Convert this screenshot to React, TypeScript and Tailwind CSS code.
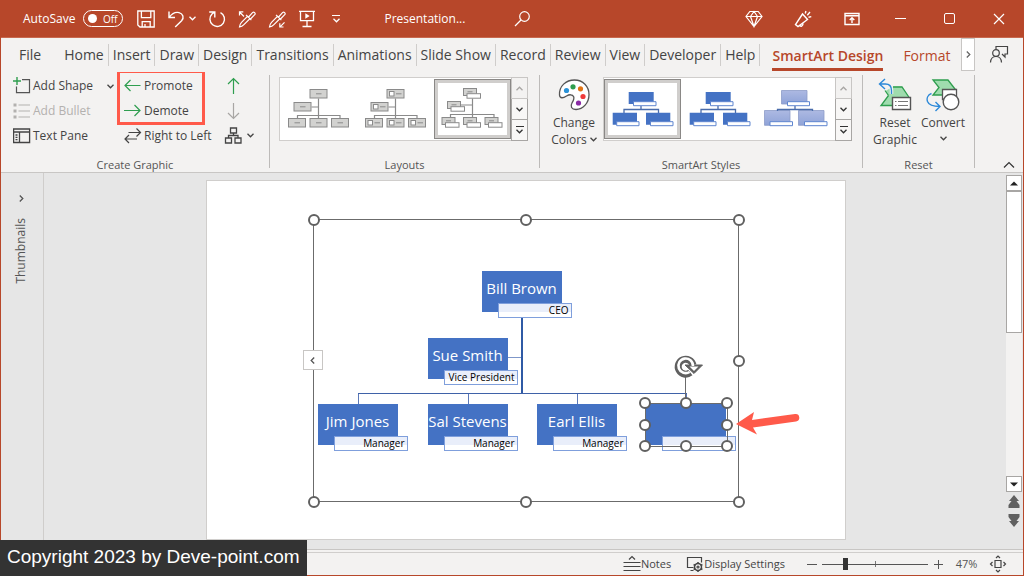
import React from 'react';

interface IconProps {
  className?: string;
  children: React.ReactNode;
  size?: number;
}

const Icon: React.FC<IconProps> = ({ className = '', children, size = 18 }) => (
  <svg
    width={size}
    height={size}
    viewBox={`0 0 ${size} ${size}`}
    fill="none"
    stroke="currentColor"
    strokeWidth="1.2"
    className={`shrink-0 ${className}`}
    aria-hidden="true"
  >
    {children}
  </svg>
);

const Chevron: React.FC<{ className?: string }> = ({ className = '' }) => (
  <svg width="7" height="5" viewBox="0 0 7 5" fill="none" stroke="currentColor" strokeWidth="1.3" className={`shrink-0 ${className}`} aria-hidden="true">
    <path d="M.5 .8 3.5 3.8 6.5 .8" />
  </svg>
);

const TABS = ['Home', 'Insert', 'Draw', 'Design', 'Transitions', 'Animations', 'Slide Show', 'Record', 'Review', 'View', 'Developer', 'Help'];

/* ---------- Title bar ---------- */

const TitleBar: React.FC = () => (
  <header className="flex h-[38px] items-center justify-between border-b border-[#c8694f] bg-[#b7472a] text-white">
    <div className="flex items-center">
      <div className="flex items-center gap-2 pl-[22px]">
        <span id="autosave" className="text-[12px]">AutoSave</span>
        <button
          type="button"
          role="switch"
          aria-checked="false"
          aria-labelledby="autosave"
          className="flex h-[17px] w-10 items-center justify-between rounded-full border border-white pl-1 pr-[5px] text-[10px] leading-none"
        >
          <span className="h-[9px] w-[9px] rounded-full bg-white" />
          Off
        </button>
      </div>

      <div className="flex items-center gap-3 pl-[14px]">
        <button type="button" aria-label="Save">
          <Icon>
            <path d="M.8 1h16.4v16H3L.8 15z M4.4 1v6.6h9.4V1 M5.2 17v-5.4h8V17 M8 17v-3" strokeWidth="1.3" />
          </Icon>
        </button>
        <button type="button" aria-label="Undo" className="flex w-[29px] items-center justify-between">
          <Icon>
            <path d="M2 1.5v6h6 M2.2 7.3C5 3.5 8.5 1.8 12 2.6c4.2 1 5.3 5.4 2.6 8.2L8.2 17" strokeWidth="1.4" />
          </Icon>
          <Chevron />
        </button>
        <button type="button" aria-label="Redo">
          <Icon>
            <path d="M1.2 2h5.6v5.6 M12.5 2.6a7.3 7.3 0 1 1-8.5 1.4l2.5-1.8" strokeWidth="1.4" />
          </Icon>
        </button>
        <button type="button" aria-label="Pick up style">
          <Icon>
            <path d="M1.5 17c.3-2.5.8-3.5 2-4.7l6-6 2.4 2.4-6 6C4.7 15.9 3.5 16.7 1.5 17z M8 4.8l5.4 5.4 M10.6 7l3.9-4.4c1.4-1.3 3.5.6 2.2 2.1L12.5 9" />
            <path d="M1.5 2l4.5 4.5 M1.5 5.5V1.8h3.8" />
          </Icon>
        </button>
        <button type="button" aria-label="Apply style">
          <Icon>
            <path d="M1.5 17c.3-2.5.8-3.5 2-4.7l6-6 2.4 2.4-6 6C4.7 15.9 3.5 16.7 1.5 17z M8 4.8l5.4 5.4 M10.6 7l3.9-4.4c1.4-1.3 3.5.6 2.2 2.1L12.5 9" />
            <path d="M16.5 12.3l-4.5 4.5 M11.8 13.2V17h3.7" />
          </Icon>
        </button>
        <button type="button" aria-label="Start from beginning">
          <Icon>
            <path d="M1 1.3h16 M2.5 1.5v9.2h13V1.5 M9 10.7v5.8 M4.5 16.5h9" strokeWidth="1.3" />
            <path d="M7.3 3.3l4.4 2.7-4.4 2.7z" fill="currentColor" stroke="none" />
          </Icon>
        </button>
        <button type="button" aria-label="Customize Quick Access Toolbar" className="flex w-4 flex-col items-center gap-[2px]">
          <span className="h-px w-2 bg-white" />
          <Chevron />
        </button>
      </div>

      <span className="pl-10 text-[12px]">Presentation...</span>
      <button type="button" aria-label="Search" className="ml-[49px]">
        <Icon>
          <circle cx="10.5" cy="6.5" r="4.8" />
          <path d="M7 10 1 16" />
        </Icon>
      </button>
    </div>

    <div className="flex h-full">
      <button type="button" aria-label="Premium" className="flex w-[49px] items-center justify-center">
        <Icon>
          <path d="M4.8 1.5h8.4L17 6.5 9 16.5 1 6.5z M1 6.5h16 M9 1.5 5.5 6.5 9 16.5l3.5-10z" />
        </Icon>
      </button>
      <button type="button" aria-label="Coming soon" className="flex w-[49px] items-center justify-center">
        <Icon>
          <path d="M8.5 4 1.5 14.5l2.5 2L13.5 9.5z M8.5 4l5 5.5 M5.5 15.2c.8 2 4 1 3.4-1.9 M11.3 3.5l.6-2.5 M13.3 5.2 16 2 M14.5 7.2l2.8-.6" strokeWidth="1.4" />
        </Icon>
      </button>
      <button type="button" aria-label="Ribbon display options" className="flex w-[49px] items-center justify-center">
        <Icon>
          <path d="M2 3.5h14v11H2z M2 5.8h14 M9 13V8 M6.7 10 9 7.8l2.3 2.2" strokeWidth="1.4" />
        </Icon>
      </button>
      <button type="button" aria-label="Minimize" className="flex w-[49px] items-center justify-center">
        <span className="h-px w-[11px] bg-white" />
      </button>
      <button type="button" aria-label="Maximize" className="flex w-[49px] items-center justify-center">
        <span className="h-[11px] w-[11px] rounded-xs border border-white" />
      </button>
      <button type="button" aria-label="Close" className="flex w-[49px] items-center justify-center">
        <Icon>
          <path d="M4 4l10 10 M14 4 4 14" />
        </Icon>
      </button>
    </div>
  </header>
);

/* ---------- Tabs ---------- */

const RibbonTabs: React.FC = () => (
  <nav className="flex h-[34px] items-center justify-between text-[14px] text-[#444]">
    <div className="flex items-center">
      <button type="button" className="h-[22px] pl-[18px] pr-[19px] leading-[22px]">File</button>
      {TABS.map(tab => (
        <button key={tab} type="button" className="h-[22px] border-r border-[#cfcdcb] px-1 leading-[22px] whitespace-nowrap">
          {tab}
        </button>
      ))}
      <button type="button" className="ml-3 mt-[5px] border-b-3 border-[#b7472a] pb-px leading-[23px] font-semibold whitespace-nowrap text-[#b7472a]">
        SmartArt Design
      </button>
      <button type="button" className="ml-5 text-[#b7472a]">Format</button>
    </div>
    <div className="flex h-full items-center">
      <button type="button" aria-label="Scroll tabs" className="flex h-[33px] w-[14px] items-center justify-center self-start border border-[#c8c6c4] bg-white text-[#666]">
        <Chevron className="-rotate-90" />
      </button>
      <button type="button" aria-label="Share" className="mx-[14px] text-[#444]">
        <Icon size={20}>
          <path d="M7 4.5V1.5h11.5v7.5H16v3l-3-3" />
          <circle cx="7" cy="8" r="3.3" />
          <path d="M1.5 17.5c.2-3.8 2.2-6 5.5-6s5.3 2.2 5.5 6" />
        </Icon>
      </button>
    </div>
  </nav>
);

/* ---------- Ribbon ---------- */

interface GroupProps {
  label: string;
  className: string;
  children: React.ReactNode;
}

const RibbonGroup: React.FC<GroupProps> = ({ label, className, children }) => (
  <section className={`mt-[3px] mb-1 flex shrink-0 flex-col border-r border-[#bdbbb9] ${className}`}>
    <div className="flex h-[84px] shrink-0">{children}</div>
    <p className="text-center text-[11px] leading-[12px] text-[#555]">{label}</p>
  </section>
);

const CreateGraphic: React.FC = () => (
  <RibbonGroup label="Create Graphic" className="w-[269px]">
    <div className="-mt-px flex w-[104px] flex-col pl-3 text-[12px]">
      <button type="button" className="flex h-[24px] items-center gap-[2px] whitespace-nowrap">
        <Icon>
          <path d="M9 2.6h7.5v13h-13V9.5" stroke="#555" />
          <path d="M4 0v8 M0 4h8" stroke="#2f9e4f" strokeWidth="1.4" />
        </Icon>
        Add Shape
      </button>
      <button type="button" disabled className="flex h-[25px] items-center gap-[2px] whitespace-nowrap text-[#b3b1af]">
        <Icon>
          <path d="M5.5 3H17 M5.5 9H17 M5.5 15H17" />
          <path d="M.5 1.5h3v3h-3z M.5 7.5h3v3h-3z M.5 13.5h3v3h-3z" fill="currentColor" stroke="none" />
        </Icon>
        Add Bullet
      </button>
      <button type="button" className="flex h-[25px] items-center gap-[2px] whitespace-nowrap">
        <Icon>
          <path d="M.6 2h16v13.5h-16z M.6 5h16 M6.5 5v10.5 M2.5 8h2 M2.5 10.3h2 M2.5 12.6h2" stroke="#444" strokeWidth="1.3" />
        </Icon>
        Text Pane
      </button>
    </div>
    <button type="button" aria-label="Add Shape options" className="-mt-px flex h-[24px] w-[11px] items-center justify-center">
      <Chevron />
    </button>
    <div className="relative -mt-px flex w-[104px] flex-col pl-2 text-[12px]">
      <button type="button" className="flex h-[24px] items-center gap-[2px] whitespace-nowrap">
        <Icon className="text-[#2f9e4f]">
          <path d="M1 8.5h15.5 M6.5 3 1 8.5 6.5 14" />
        </Icon>
        Promote
      </button>
      <button type="button" className="flex h-[25px] items-center gap-[2px] whitespace-nowrap">
        <Icon className="text-[#2f9e4f]">
          <path d="M0 8.5h16 M10.5 3l5.5 5.5-5.5 5.5" />
        </Icon>
        Demote
      </button>
      <button type="button" className="flex h-[25px] items-center gap-[2px] whitespace-nowrap">
        <Icon>
          <path d="M4.5 5.5h12 M12.5 1.5l4 4-4 4 M1 12h12 M5 8 1 12l4 4" stroke="#444" />
        </Icon>
        Right to Left
      </button>
      {/* Highlight round Promote / Demote */}
      <div className="pointer-events-none absolute -top-1 left-px h-[55px] w-[88px] border-3 border-[#ff5a4a]" />
    </div>
    <div className="-mt-px flex flex-col pl-1">
      <button type="button" aria-label="Move up" className="flex h-[24px] items-center text-[#2f9e4f]">
        <Icon>
          <path d="M9.5 17V1.5 M4 7l5.5-5.5L15 7" />
        </Icon>
      </button>
      <button type="button" aria-label="Move down" disabled className="flex h-[25px] items-center text-[#a8a6a4]">
        <Icon>
          <path d="M9.5 1v15.5 M4 11l5.5 5.5L15 11" />
        </Icon>
      </button>
      <button type="button" aria-label="Org chart layout" className="flex h-[25px] items-center gap-[5px] text-[#444]">
        <Icon>
          <path d="M6.5 1h6v5h-6z M1.5 11h6v5h-6z M11 11h6v5h-6z M9.5 6v2.5 M4.5 11V8.5H14V11" strokeWidth="1.3" />
        </Icon>
        <Chevron />
      </button>
    </div>
  </RibbonGroup>
);

const LAYOUT_BOXES = [
  [30, 11.5],
  [14, 24.5],
  [8.5, 40.5],
  [30, 40.5],
  [51.5, 40.5],
];

const LAYOUT_TITLE_BOXES = [
  [29.5, 10.5],
  [13.5, 23.5],
  [8, 39.5],
  [29.5, 39.5],
  [51, 39.5],
];

const LayoutThumb: React.FC<{ picture?: boolean }> = ({ picture }) => (
  <svg width="77" height="62" viewBox="0 0 77 62" fill="none" stroke="#8a8a8a" aria-hidden="true">
    <path d="M38.5 20.5v20 M31.5 29h7 M17.5 40.5V37.5h42.5v3" strokeWidth="1.2" />
    {LAYOUT_BOXES.map(([x, y]) => (
      <g key={`${x}-${y}`}>
        <rect x={x} y={y} width="17" height="8.5" fill="#d2d2d0" />
        {picture && <rect x={x + 2.5} y={y + 2} width="4.5" height="4.5" fill="#fff" />}
        <path d={picture ? `M${x + 9} ${y + 4.3}h5.5` : `M${x + 6} ${y + 4.3}h5.5`} />
      </g>
    ))}
  </svg>
);

const TitledLayoutThumb: React.FC = () => (
  <svg width="77" height="62" viewBox="0 0 77 62" fill="none" stroke="#8a8a8a" aria-hidden="true">
    <path d="M38.5 20.5v19 M27 27h11.5 M16.5 39.5V36.5H60v3" strokeWidth="1.2" />
    {LAYOUT_TITLE_BOXES.map(([x, y]) => (
      <g key={`${x}-${y}`}>
        <rect x={x} y={y} width="13" height="7" fill="#d2d2d0" />
        <path d={`M${x + 4} ${y + 3.3}h5`} />
        <rect x={x + 3.5} y={y + 5.2} width="13.5" height="4.5" fill="#fff" />
      </g>
    ))}
  </svg>
);

const StyleThumb: React.FC = () => (
  <svg width="77" height="62" viewBox="0 0 77 62" fill="none" aria-hidden="true">
    <path d="M37 28v3.5 M20 35v-3.5h34.5V35" stroke="#4a6cab" strokeWidth="1.3" />
    <path d="M24.7 14h25v12h-25z M8.7 34.7h24.3v12H8.7z M42 34.7h24.3v12H42z" fill="#4472c4" />
    <path d="M29.5 23.7h22.5v4H29.5z M12.7 43.7h22.3v4H12.7z M46.5 43.7H69v4H46.5z" fill="#fff" stroke="#5f86cf" />
  </svg>
);

const SoftStyleThumb: React.FC = () => (
  <svg width="77" height="62" viewBox="0 0 77 62" fill="none" aria-hidden="true">
    <defs>
      <linearGradient id="soft" x1="0" y1="0" x2="0" y2="1">
        <stop offset="0" stopColor="#adb9e2" />
        <stop offset="1" stopColor="#8fa3d8" />
      </linearGradient>
    </defs>
    <g fill="url(#soft)" stroke="#8d9cc8" strokeWidth=".8">
      <path d="M23.5 12.5h25.5v13.5H23.5z" />
      <path d="M6.5 32.5H32v14.8H6.5z" />
      <path d="M40.5 32.5H66v14.8H40.5z" />
    </g>
    <path d="M37 28v3.5 M19.5 33v-1.5h35V33" stroke="#4a6cab" strokeWidth="1.3" />
    <path d="M29.5 23.7h22v4h-22z M12 43.7h22.5v4H12z M46.5 43.7H69v4H46.5z" fill="#fff" stroke="#5f86cf" />
  </svg>
);

interface GalleryProps {
  label: string;
  items: { name: string; thumb: React.ReactNode }[];
  selected: number;
}

const Gallery: React.FC<GalleryProps> = ({ label, items, selected }) => (
  <div className="mt-[2px] flex h-16 border border-[#d0cecc] bg-white" role="group" aria-label={label}>
    {items.map((item, i) => (
      <button key={item.name} type="button" aria-label={item.name} aria-pressed={i === selected} className="relative w-[77px]">
        {item.thumb}
        {i === selected && (
          <span className="absolute inset-x-0 top-px bottom-px border border-[#8a8886]">
            <span className="block h-full w-full border-3 border-[#d0cecc]" />
          </span>
        )}
      </button>
    ))}
    <div className="-my-px -mr-px flex w-[17px] flex-col text-[#333]">
      <button type="button" aria-label={`${label} up`} disabled className="flex h-[22px] items-center justify-center border border-[#c8c6c4] bg-[#f3f2f1] text-[#a8a6a4]">
        <Chevron className="rotate-180" />
      </button>
      <button type="button" aria-label={`${label} down`} className="flex h-[21px] items-center justify-center border-x border-b border-[#a8a6a4] bg-[#f8f7f6]">
        <Chevron />
      </button>
      <button type="button" aria-label={`${label} more`} className="flex h-[21px] flex-col items-center justify-center gap-[2px] border-x border-b border-[#a8a6a4] bg-[#f8f7f6]">
        <span className="h-px w-2 bg-[#333]" />
        <Chevron />
      </button>
    </div>
  </div>
);

const Ribbon: React.FC = () => (
  <div className="flex h-[101px] overflow-hidden border-b border-[#c8c6c4] text-[#444]">
    <CreateGraphic />

    <RibbonGroup label="Layouts" className="w-[270px]">
      <div className="pl-[9px]">
        <Gallery
          label="Layouts"
          selected={2}
          items={[
            { name: 'Organization Chart', thumb: <LayoutThumb /> },
            { name: 'Picture Organization Chart', thumb: <LayoutThumb picture /> },
            { name: 'Name and Title Organization Chart', thumb: <TitledLayoutThumb /> },
          ]}
        />
      </div>
    </RibbonGroup>

    <RibbonGroup label="SmartArt Styles" className="w-[323px]">
      <button type="button" className="flex w-[63px] flex-col items-center pl-[5px] pt-[3px] text-[12px] leading-[17px]">
        <svg width="34" height="34" viewBox="0 0 34 34" fill="none" className="mb-[2px] shrink-0" aria-hidden="true">
          <path
            d="M2.5 17C2 8 9 2 17.5 2 26 2 32 8.5 32 16.5 32 25 26 31.5 19 31.5c-4.5 0-6-3.2-4-6.5 1.3-2.2 2.5-4.2 1.7-6.3-1.2-2.7-4.7-2.2-7.2-.7C6.5 20 2.8 21 2.5 17z"
            fill="#fff"
            stroke="#555"
            strokeWidth="1.3"
          />
          <circle cx="9.5" cy="12.5" r="2.6" fill="#2b93d8" />
          <circle cx="16" cy="8.8" r="2.6" fill="#2f9e4f" />
          <circle cx="23.5" cy="10.8" r="2.6" fill="#e07414" />
          <circle cx="26" cy="18.5" r="2.6" fill="#ef3b3b" />
          <circle cx="21.5" cy="25" r="2.6" fill="#8a2ba5" />
        </svg>
        <span>Change</span>
        <span className="flex items-center gap-[3px]">Colors <Chevron /></span>
      </button>
      <div>
        <Gallery
          label="SmartArt Styles"
          selected={0}
          items={[
            { name: 'Simple Fill', thumb: <StyleThumb /> },
            { name: 'White Outline', thumb: <StyleThumb /> },
            { name: 'Subtle Effect', thumb: <SoftStyleThumb /> },
          ]}
        />
      </div>
    </RibbonGroup>

    <RibbonGroup label="Reset" className="w-[112px]">
      <button type="button" className="ml-2 flex w-12 flex-col items-center pt-[3px] text-[12px] leading-[17px]">
        <svg width="34" height="34" viewBox="0 0 34 34" fill="none" className="mb-[2px] shrink-0" aria-hidden="true">
          <path d="M15 8.5h9l8 12V27.5H2.5l8-9.5-3-5z" fill="#9fdcae" />
          <path d="M15 9h9l7.5 11 M10.5 17.5 3 27.5h11 M10.5 17.5 7 12.5" stroke="#2f9e4f" strokeWidth="1.3" />
          <path d="M1.5 6h6c4 0 6 2.5 6 6.5v3.5 M7 1 1.5 6 7 11" stroke="#f3f2f1" strokeWidth="3.5" />
          <path d="M1.5 6h6c4 0 6 2.5 6 6.5v3.5 M7 1 1.5 6 7 11" stroke="#2b88d8" strokeWidth="1.4" />
          <path d="M14.5 19.5H32.5V31.5H14.5z" fill="#fff" stroke="#555" strokeWidth="1.4" />
          <path d="M17 23.5h1.5 M20 23.5h10 M17 27.5h1.5 M20 27.5h10" stroke="#777" />
        </svg>
        <span>Reset</span>
        <span>Graphic</span>
      </button>
      <button type="button" className="flex w-12 flex-col items-center pt-[3px] text-[12px] leading-[17px]">
        <svg width="34" height="34" viewBox="0 0 34 34" fill="none" className="mb-[2px] shrink-0" aria-hidden="true">
          <path d="M7 2h15l7 9-6 6H7l6-7.5z" fill="#9fdcae" stroke="#2f9e4f" strokeWidth="1.3" />
          <path d="M16.5 11.5h14v10h-14z" fill="#fff" stroke="#555" strokeWidth="1.3" />
          <circle cx="25" cy="24" r="7.8" fill="#fff" stroke="#555" strokeWidth="1.4" />
          <path d="M5.5 15.5C1.5 17 .5 20.5 1.5 23.5 3 27.5 8 28.5 14 28.5 M9.5 24l4.5 4.5L9.5 33" stroke="#2b88d8" strokeWidth="1.4" />
        </svg>
        <span>Convert</span>
        <Chevron className="mt-[5px]" />
      </button>
    </RibbonGroup>

    <button type="button" aria-label="Collapse the Ribbon" className="mr-2 mb-[3px] ml-auto self-end">
      <svg width="12" height="8" viewBox="0 0 12 8" fill="none" stroke="#333" strokeWidth="1.2" aria-hidden="true">
        <path d="M1 6.5 6 1.5l5 5" />
      </svg>
    </button>
  </div>
);

/* ---------- Slide ---------- */

interface ChartNode {
  name: string;
  title: string;
  x: number;
  y: number;
}

const NODES: ChartNode[] = [
  { name: 'Bill Brown', title: 'CEO', x: 275, y: 90 },
  { name: 'Sue Smith', title: 'Vice President', x: 221, y: 157 },
  { name: 'Jim Jones', title: 'Manager', x: 111, y: 223 },
  { name: 'Sal Stevens', title: 'Manager', x: 221, y: 223 },
  { name: 'Earl Ellis', title: 'Manager', x: 330, y: 223 },
  { name: '', title: '', x: 439, y: 223 },
];

const FRAME_HANDLES = [
  [107, 39], [319, 39], [532, 39],
  [532, 180],
  [107, 321], [319, 321], [532, 321],
];

const SHAPE_HANDLES = [
  [438, 222], [479, 222], [520, 222],
  [438, 244], [520, 244],
  [438, 265], [479, 265], [520, 265],
];

const Slide: React.FC = () => (
  <div className="relative h-[358px] w-[638px] shrink-0 bg-white outline outline-[#d0cecc]">
    <svg width="638" height="358" viewBox="0 0 638 358" fill="none" className="absolute inset-0" aria-hidden="true">
      <path d="M301 176.5h14" stroke="#7f97c9" />
      <path d="M151.5 223v-10 M261.5 223v-10 M370.5 223v-10 M479.5 223v-10" stroke="#5b78b8" />
      <path d="M151 212.5h329" stroke="#3f62a8" />
      <path d="M315 137v75" stroke="#2f5aa5" strokeWidth="2" />
    </svg>

    {NODES.map(node => (
      <div key={`${node.x}-${node.y}`} className="absolute" style={{ left: node.x, top: node.y }}>
        <div className="h-[41px] w-[80px] bg-[#4472c4] text-center text-[15px] leading-[34px] whitespace-nowrap text-white">
          {node.name}
        </div>
        <div className="absolute top-8 left-4 h-[15px] w-[74px] border border-[#7f9fdc] bg-linear-to-b from-[#e9eefa] from-60% to-white to-60% pr-[2px] text-right text-[10px] leading-[12px] whitespace-nowrap text-black">
          {node.title}
        </div>
      </div>
    ))}

    {/* Selection frames and handles */}
    <svg width="638" height="358" viewBox="0 0 638 358" fill="none" className="pointer-events-none absolute inset-0" aria-hidden="true">
      <path d="M106.5 38.5h425v282h-425z" stroke="#6b6b6b" />
      <path d="M438.5 222.5h82v43h-82z M478.5 222v-27" stroke="#6b6b6b" />
      <g fill="#fff" stroke="#606060" strokeWidth="2">
        {[...FRAME_HANDLES, ...SHAPE_HANDLES].map(([cx, cy]) => (
          <circle key={`${cx}-${cy}`} cx={cx} cy={cy} r="5" />
        ))}
      </g>
      {/* Rotate handle: dark outline first, then the white core */}
      <path d="M483.3 191.6A7.5 7.5 0 1 1 486 184" stroke="#606060" strokeWidth="7" />
      <path d="M478 184h17.5l-8.5 8.5z" fill="#606060" stroke="#606060" />
      <path d="M482.6 191A7.3 7.3 0 1 1 486 185" stroke="#fff" strokeWidth="2.6" />
      <path d="M482.5 185.5h9l-4.500 4.500z" fill="#fff" />
      <path d="M529 243l18-12-2 8 43-6a3.500 3.500 0 0 1 1 7.500l-43 6 4 7z" fill="#ff5a4a" />
    </svg>

    <button type="button" aria-label="Open text pane" className="absolute top-[169px] left-24 flex h-5 w-5 items-center justify-center border border-[#c8c6c4] bg-white text-[#555]">
      <Chevron className="rotate-90" />
    </button>
  </div>
);

/* ---------- Workspace ---------- */

const Workspace: React.FC = () => (
  <div className="flex flex-1 bg-[#e6e6e6] pr-px">
    <aside className="flex w-[43px] flex-col items-center border-r border-[#cfcdcb] pt-[22px] pr-[2px] text-[#555]">
      <button type="button" aria-label="Expand thumbnails" className="flex h-[7px] items-center">
        <Chevron className="-rotate-90" />
      </button>
      <span className="mt-4 rotate-180 text-[12px] leading-[16px] [writing-mode:vertical-rl]">Thumbnails</span>
    </aside>

    <main className="flex flex-1 items-center justify-center pb-[2px] pl-px">
      <Slide />
    </main>

    <div className="mt-[2px] flex w-4 flex-col bg-[#f3f2f1]">
      <button type="button" aria-label="Scroll up" className="flex h-4 items-center justify-center border border-[#a8a6a4] bg-white">
        <svg width="8" height="5" viewBox="0 0 8 5" aria-hidden="true"><path d="M0 4.5 4 .5l4 4z" fill="#222" /></svg>
      </button>
      <div className="h-[142px] border border-[#a8a6a4] bg-white" />
      <button type="button" aria-label="Scroll down" className="mt-auto flex h-4 items-center justify-center border border-[#a8a6a4] bg-white">
        <svg width="8" height="5" viewBox="0 0 8 5" aria-hidden="true"><path d="M0 .5 4 4.5l4-4z" fill="#222" /></svg>
      </button>
      <div className="flex h-[57px] flex-col items-center gap-1 bg-[#e6e6e6] pt-[3px]">
        <button type="button" aria-label="Previous slide" className="h-[14px]">
          <svg width="12" height="14" viewBox="0 0 12 14" fill="#606060" aria-hidden="true"><path d="M6 0l5 6H8.5l3 4v3H.5v-3l3-4H1z" /></svg>
        </button>
        <button type="button" aria-label="Next slide" className="h-[14px]">
          <svg width="12" height="14" viewBox="0 0 12 14" fill="#606060" aria-hidden="true"><path d="M6 14l5-6H8.5l3-4V1H.5v3l3 4H1z" /></svg>
        </button>
      </div>
    </div>
  </div>
);

const StatusBar: React.FC = () => (
  <footer className="border-t border-[#c8c6c4] pt-[2px]">
    <div className="flex h-[23px] items-center justify-end border-t border-[#d0cecc] pr-4 text-[11px] text-[#444]">
      <button type="button" className="flex items-center">
        <Icon>
          <path d="M6 4.5 9 1.5l3 3 M.5 7.5h17 M.5 11.5h17 M.5 15.5h17" />
        </Icon>
        Notes
      </button>
      <button type="button" className="ml-[15px] flex items-center">
        <Icon>
          <path d="M7.5 12.5H1.5v-10h14v5 M4.5 15.5h3" />
          <circle cx="12" cy="12" r="3.5" strokeWidth="1.5" />
          <circle cx="12" cy="12" r="1" />
          <path d="M12 7v2 M12 15v2 M7.6 9.5l1.8 1 M14.6 13.5l1.8 1 M7.6 14.5l1.8-1 M14.6 10.5l1.8-1" strokeWidth="1.5" />
        </Icon>
        Display Settings
      </button>
      <button type="button" aria-label="Zoom out" className="ml-[22px] flex h-3 w-[10px] items-center">
        <span className="h-px w-full bg-[#555]" />
      </button>
      <span className="relative mx-[5px] flex h-3 w-[106px] items-center">
        <span className="absolute top-[3px] left-[53px] h-[6px] w-px bg-[#777]" />
        <input
          type="range"
          aria-label="Zoom"
          min={0}
          max={100}
          defaultValue={21}
          className="relative h-3 w-full appearance-none bg-transparent [&::-webkit-slider-runnable-track]:h-px [&::-webkit-slider-runnable-track]:bg-[#555] [&::-webkit-slider-thumb]:-mt-[6px] [&::-webkit-slider-thumb]:h-3 [&::-webkit-slider-thumb]:w-[5px] [&::-webkit-slider-thumb]:appearance-none [&::-webkit-slider-thumb]:bg-[#333]"
        />
      </span>
      <button type="button" aria-label="Zoom in" className="flex h-[10px] w-[10px] items-center justify-center">
        <svg width="10" height="10" viewBox="0 0 10 10" stroke="#555" aria-hidden="true"><path d="M1 5.5h9 M5.5 1v9" /></svg>
      </button>
      <button type="button" className="ml-3 w-[23px] text-[#555]">47%</button>
      <button type="button" aria-label="Fit slide to window" className="ml-[11px]">
        <Icon>
          <path d="M6 5.5h6v7H6z M7 3l2-2 2 2 M7 15l2 2 2-2 M3.5 7l-2 2 2 2 M14.5 7l2 2-2 2" />
        </Icon>
      </button>
    </div>
  </footer>
);

const App: React.FC = () => (
  <div className="relative flex min-h-screen flex-col border-x border-b border-[#b7472a] bg-[#f3f2f1] font-['Open_Sans','Noto_Sans',sans-serif]">
    <TitleBar />
    <RibbonTabs />
    <Ribbon />
    <Workspace />
    <StatusBar />
    <p className="absolute -bottom-px -left-px h-9 bg-[#333] px-[7px] font-['Liberation_Sans',sans-serif] text-[19px] leading-[33px] text-white">
      Copyright 2023 by Deve-point.com
    </p>
  </div>
);

export default App;
